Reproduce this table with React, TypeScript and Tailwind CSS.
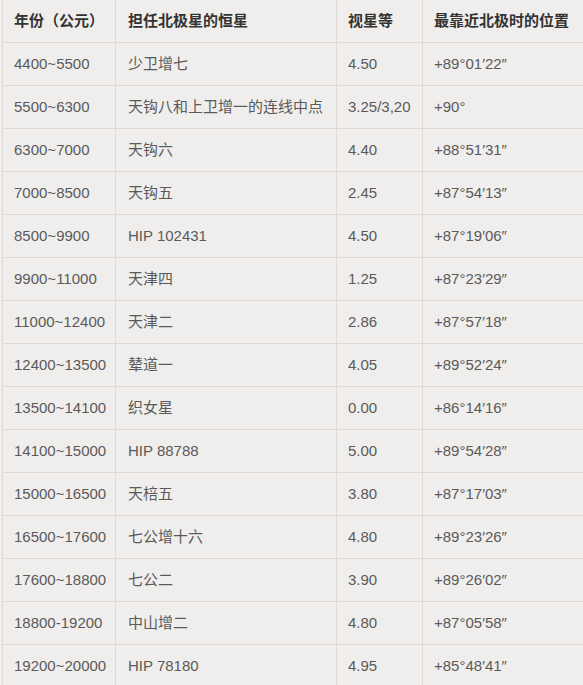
const rows: [string, string, string, string][] = [
  ['4400~5500', '少卫增七', '4.50', '+89°01′22″'],
  ['5500~6300', '天钩八和上卫增一的连线中点', '3.25/3,20', '+90°'],
  ['6300~7000', '天钩六', '4.40', '+88°51′31″'],
  ['7000~8500', '天钩五', '2.45', '+87°54′13″'],
  ['8500~9900', 'HIP 102431', '4.50', '+87°19′06″'],
  ['9900~11000', '天津四', '1.25', '+87°23′29″'],
  ['11000~12400', '天津二', '2.86', '+87°57′18″'],
  ['12400~13500', '辇道一', '4.05', '+89°52′24″'],
  ['13500~14100', '织女星', '0.00', '+86°14′16″'],
  ['14100~15000', 'HIP 88788', '5.00', '+89°54′28″'],
  ['15000~16500', '天棓五', '3.80', '+87°17′03″'],
  ['16500~17600', '七公增十六', '4.80', '+89°23′26″'],
  ['17600~18800', '七公二', '3.90', '+89°26′02″'],
  ['18800-19200', '中山增二', '4.80', '+87°05′58″'],
  ['19200~20000', 'HIP 78180', '4.95', '+85°48′41″'],
];

const headers = ['年份（公元）', '担任北极星的恒星', '视星等', '最靠近北极时的位置'];

const cell = 'h-[43px] flex items-center border-b border-r border-[#dcd9d6] whitespace-nowrap overflow-hidden';
const pads = ['pl-[11px]', 'pl-[12px]', 'pl-[11px]', 'pl-[11px]'];

export default function App() {
  return (
    <div
      className="w-[583px] h-[685px] overflow-hidden bg-[#f0eeec]"
      style={{ fontFamily: '"Liberation Sans", Arial, "Noto Sans CJK SC", sans-serif' }}
    >
      <div className="ml-[2px] w-[600px] border-l border-[#dcd9d6] grid grid-cols-[113px_221px_86px_1fr]">
        {headers.map((h, i) => (
          <div key={h} className={`${cell} ${pads[i]} text-[15px] font-bold text-[#333333]`}>
            {h}
          </div>
        ))}
        {rows.map((r) =>
          r.map((c, i) => (
            <div key={r[0] + i} className={`${cell} ${pads[i]} text-[15px] text-[#5a5a5a]`}>
              {c}
            </div>
          ))
        )}
      </div>
    </div>
  );
}
